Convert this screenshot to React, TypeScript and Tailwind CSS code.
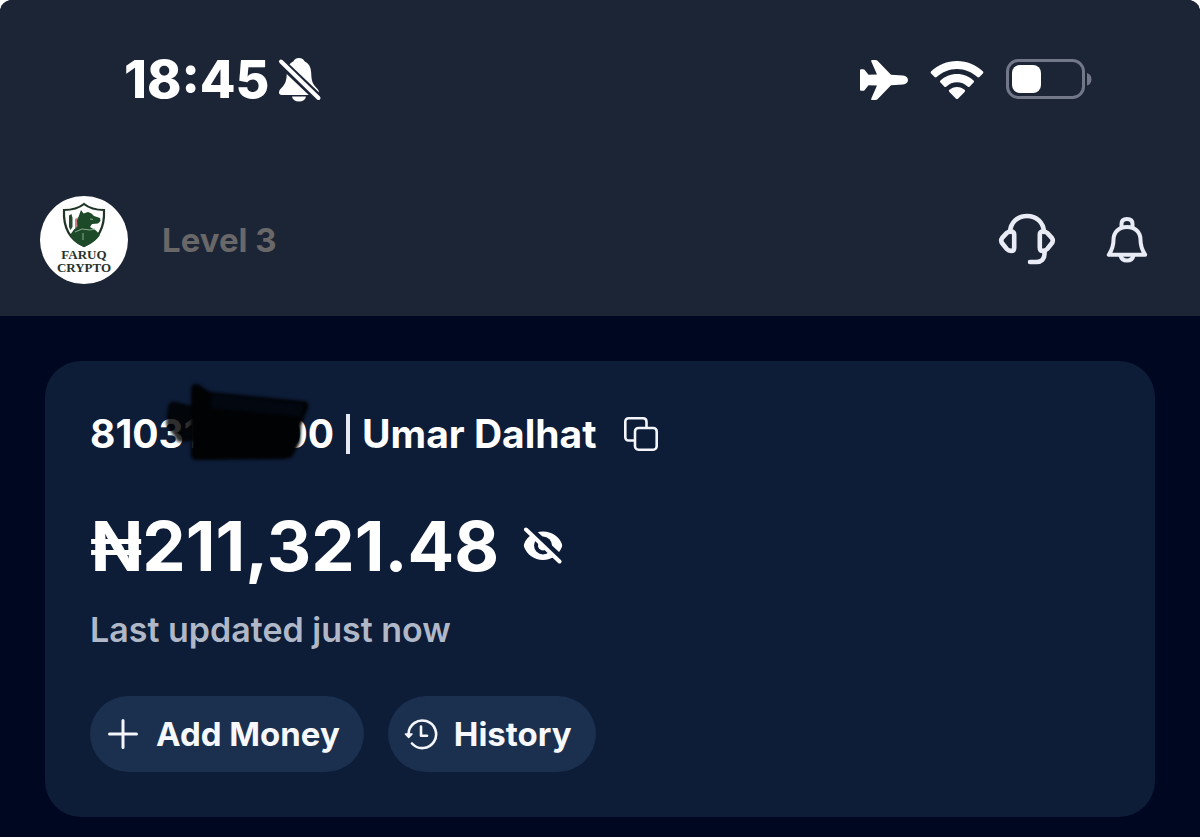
// App.tsx

import { ReactNode, useState } from 'react';

function SilentIcon() {
  return (
    <svg width="44" height="46" viewBox="0 0 44 46" fill="none" aria-hidden="true">
      <path
        d="M21 1c-3 0-4.800 1.500-5.500 3.300C11 6.500 9 10.500 8.800 16c-.2 7-1.300 10.500-4 13.500C3 31.600 1 33 1 35.500c0 1.600 1 2.400 2.800 2.400h34.400c1.800 0 2.800-.8 2.800-2.400 0-2.500-2-3.900-3.800-6-2.700-3-3.800-6.500-4-13.500C33 10.500 31 6.500 26.500 4.300 25.800 2.500 24 1 21 1Z"
        fill="#fff"
      />
      <path d="M14 39.500h14c-.6 3.200-3.200 5-7 5s-6.400-1.800-7-5Z" fill="#fff" />
      <path d="m2 4.500 40 38" stroke="#1c2536" strokeWidth="9" />
      <path d="m3 4.500 37.500 36.500" stroke="#fff" strokeWidth="4" strokeLinecap="round" />
    </svg>
  );
}

function PlaneIcon() {
  return (
    <svg width="48" height="42" viewBox="0 0 48 42" fill="#fff" aria-hidden="true">
      <path d="M43 16.400c3 .4 5 2.200 5 4.600s-2 4.200-5 4.600l-12 .6-13.500 14c-.6.6-1.200.8-2 .8h-3.200c-1 0-1.400-.6-1-1.600L17 26.600l-8.500-.4-4 5c-.3.4-.6.6-1.200.6H1.200c-.8 0-1.200-.5-1.200-1.300V11.500c0-.8.400-1.300 1.200-1.300h2.100c.6 0 .9.200 1.200.6l4 5 8.500-.4-5.700-12.800c-.4-1 0-1.600 1-1.600h3.200c.8 0 1.400.2 2 .8L31 15.800Z" />
    </svg>
  );
}

function WifiIcon() {
  return (
    <svg width="54" height="40" viewBox="0 0 54 40" fill="#fff" aria-hidden="true">
      <path d="M27 1C17 1 8 4.800 1.200 11.200c-.7.7-.7 1.500-.1 2.200l3.500 3.700c.6.6 1.400.6 2.100 0C12.100 12 19.200 9 27 9s14.900 3 20.300 8.100c.7.6 1.500.6 2.100 0l3.500-3.700c.6-.7.600-1.500-.1-2.200C46 4.800 37 1 27 1Z" />
      <path d="M27 14c-6.500 0-12.200 2.500-16.500 6.400-.7.7-.7 1.500 0 2.200l3.700 3.800c.6.700 1.400.7 2.200 0 2.900-2.600 6.500-4.200 10.600-4.200s7.700 1.600 10.600 4.200c.8.7 1.600.7 2.200 0l3.700-3.800c.7-.7.7-1.500 0-2.200C39.200 16.500 33.500 14 27 14Z" />
      <path d="M27 27c-3 0-5.600 1.100-7.600 2.800-.7.600-.7 1.400 0 2.100l6.400 6.500c.8.800 1.600.8 2.400 0l6.400-6.500c.7-.7.7-1.500 0-2.100C32.600 28.100 30 27 27 27Z" />
    </svg>
  );
}

function BatteryIcon() {
  return (
    <svg width="86" height="42" viewBox="0 0 86 42" fill="none" aria-hidden="true">
      <rect x="1.500" y="1.500" width="76" height="37" rx="11" stroke="#727888" strokeWidth="3" />
      <rect x="6" y="6" width="29" height="28" rx="8" fill="#fff" />
      <path d="M81 14c2.900.8 4.500 3.300 4.500 6.300s-1.600 5.500-4.500 6.300Z" fill="#727888" />
    </svg>
  );
}

function HeadsetIcon() {
  return (
    <svg
      width="58"
      height="54"
      viewBox="0 0 58 54"
      fill="none"
      stroke="#e9ecf5"
      strokeWidth="4.600"
      strokeLinecap="round"
      strokeLinejoin="round"
      aria-hidden="true"
    >
      <path d="M12 19C12.500 9.500 19.500 3 29 3s16.500 6.500 17 16" />
      <path d="M13 18.500c2 0 3.200 1.200 3.200 3.200v13c0 2-1.200 3.200-3.200 3.200-1.800 0-3-.6-4.200-1.900l-4.600-5.700c-1.200-1.700-1.200-3.700 0-5.400l4.600-5c1.200-1.100 2.400-1.400 4.200-1.400Z" />
      <path d="M45 18.500c-2 0-3.200 1.200-3.200 3.200v13c0 2 1.200 3.200 3.200 3.200 1.800 0 3-.6 4.200-1.900l4.600-5.700c1.200-1.700 1.200-3.700 0-5.400l-4.600-5c-1.200-1.100-2.400-1.400-4.200-1.400Z" />
      <path d="M46.500 38.500V41c0 5-3 8-8 8H32" />
    </svg>
  );
}

function BellIcon() {
  return (
    <svg
      width="42"
      height="50"
      viewBox="0 0 42 50"
      fill="none"
      stroke="#e9ecf5"
      strokeWidth="4"
      strokeLinecap="round"
      strokeLinejoin="round"
      aria-hidden="true"
    >
      <path d="M15.500 12V9C15.500 5.700 17.500 4 21 4s5.500 1.700 5.500 5v3" />
      <path d="M21 12c-8 0-13.500 5-13.500 13 0 6-.9 9-4.700 14.800h36.400C35.400 34 34.500 31 34.500 25c0-8-5.500-13-13.500-13Z" />
      <path d="M14.500 40.500c.8 3.800 3 5 6.500 5s5.700-1.200 6.500-5" />
    </svg>
  );
}

function CopyIcon() {
  return (
    <svg
      width="34"
      height="34"
      viewBox="0 0 34 34"
      fill="none"
      stroke="#f4f6fb"
      strokeWidth="2.600"
      strokeLinejoin="round"
      aria-hidden="true"
    >
      <path d="M11 23.500H4.800c-2.300 0-3.500-1.200-3.500-3.500V4.800c0-2.300 1.200-3.500 3.500-3.500H19c2.300 0 3.500 1.200 3.500 3.500V11" />
      <rect x="11" y="11" width="21.700" height="21.700" rx="3.500" />
    </svg>
  );
}

function EyeOffIcon({ slashed }: { slashed: boolean }) {
  return (
    <svg width="40" height="38" viewBox="0 0 40 38" fill="none" aria-hidden="true">
      <path
        d="M20 4.500C11 4.500 4 9.500 1.200 16.700c-.5 1.200-.5 2.400 0 3.600C4 27.500 11 33 20 33s16-5.500 18.800-12.700c.5-1.200.5-2.400 0-3.600C36 9.500 29 4.500 20 4.500Z"
        fill="#fff"
      />
      <circle cx="20" cy="18.500" r="9" fill="#0d1c37" />
      <circle cx="20" cy="18.500" r="5" fill="#fff" />
      {slashed && (
        <>
          <path d="m2-2 40 37.500" stroke="#0d1c37" strokeWidth="7" />
          <path d="m3 2.500 33.500 32" stroke="#fff" strokeWidth="4" strokeLinecap="round" />
        </>
      )}
    </svg>
  );
}

function PlusIcon() {
  return (
    <svg width="34" height="32" viewBox="0 0 34 32" stroke="#f4f6fb" strokeWidth="3" strokeLinecap="round" aria-hidden="true">
      <path d="M17 2.500v27M3.500 16h27" />
    </svg>
  );
}

function HistoryIcon() {
  return (
    <svg
      width="34"
      height="32"
      viewBox="0 0 34 32"
      fill="none"
      stroke="#f4f6fb"
      strokeWidth="2.600"
      strokeLinecap="round"
      strokeLinejoin="round"
      aria-hidden="true"
    >
      <path d="M4.500 16A13.800 13.800 0 1 1 8 25.500" />
      <path d="M1.500 16h6.500L4.700 19.500Z" fill="#f4f6fb" strokeWidth="1.600" />
      <path d="M17 8.500v9.200h6" />
    </svg>
  );
}

function Shield() {
  return (
    <svg width="46" height="46" viewBox="0 0 46 46" fill="none" aria-hidden="true">
      <path d="M23 2c5 4 12 6 20 6 .8 16-4 29-20 36C7 37 2.200 24 3 8c8 0 15-2 20-6Z" fill="#fdfefd" stroke="#1f3327" strokeWidth="2.200" />
      <path d="M8 13.500 10.500 12l1 4v9L9.500 28 8 25Z" fill="#234a30" />
      <path d="m14 17 2.500-1.500 2 9-2.500 4-2-3Z" fill="#c98080" />
      <path
        d="m20 8 2.500 3.500L27 10l3.500 1.500L33 14l6 2 .5 3-2.500 2.500-6 .5-2 3 6 3.500 4 4.500c-3 5-9 9-16 12-6-2.500-11.500-7-14-12l4-5.500 3.500-3-.5-6 2-5Z"
        fill="#1d4a28"
      />
      <path d="m14 30 7-3 8 1 5-1M22 31v7M29 17l3 .5" stroke="#8eaa93" strokeWidth="1" />
    </svg>
  );
}

// marker strokes that cover the middle digits of the account number
function Scribble() {
  return (
    <svg
      className="pointer-events-none absolute -top-6 left-17 h-20 w-40 overflow-visible"
      viewBox="0 0 160 80"
      fill="none"
      aria-hidden="true"
    >
      <defs>
        <filter id="marker" x="-10%" y="-10%" width="120%" height="120%" colorInterpolationFilters="sRGB">
          <feGaussianBlur stdDeviation="1.500" />
        </filter>
      </defs>
      <g filter="url(#marker)">
        <path d="M10 24c2-5 5-5 8-4l17 4v35l-15 1L8 42Z" fill="#000" fillOpacity=".82" />
        <path d="M33 6c2-5 6-6 11-1l8 5 92 9c5 0 7 2 6 7l-7 17-1 17-8 15-7 2-88 1c-4 0-6-2-6-6V60Z" fill="#010204" />
        <path d="m54 12 92 10-3 13-90-9Z" fill="#020710" />
      </g>
    </svg>
  );
}

function PillButton({ icon, label }: { icon: ReactNode; label: string }) {
  return (
    <button
      type="button"
      className="flex h-19 items-center gap-4 rounded-full bg-[#1b2f4e] pr-6 pl-4 text-[33px] leading-10 font-bold text-[#f6f8fc]"
    >
      {icon}
      {label}
    </button>
  );
}

export default function App() {
  const [visible, setVisible] = useState(true);

  return (
    <div className="min-h-screen overflow-hidden rounded-t-xl bg-[#000720] font-['Inter',sans-serif] text-white">
      <header className="bg-[#1c2536] pt-12 pb-8">
        <div className="flex h-16 items-center justify-between pr-27 pl-31">
          <div className="flex items-center gap-2">
            <span className="text-[52px] leading-16 font-extrabold">18:45</span>
            <SilentIcon />
          </div>
          <div className="flex items-center gap-[22px]">
            <PlaneIcon />
            <WifiIcon />
            <BatteryIcon />
          </div>
        </div>

        <div className="mt-21 flex items-center justify-between pr-13 pl-10">
          <div className="flex items-center gap-[34px]">
            <div className="flex size-22 flex-col items-center rounded-full bg-white pt-1.5 font-['Liberation_Serif',serif] text-[13px] leading-[13px] font-bold text-[#26332c]">
              <Shield />
              <span>FARUQ</span>
              <span>CRYPTO</span>
            </div>
            <span className="text-[33px] leading-10 font-bold text-[#6a6768]">Level 3</span>
          </div>
          <div className="flex items-center gap-[50px]">
            <button type="button" aria-label="Support">
              <HeadsetIcon />
            </button>
            <button type="button" aria-label="Notifications">
              <BellIcon />
            </button>
          </div>
        </div>
      </header>

      <main className="px-[45px] pt-[45px] pb-5">
        <section className="rounded-[36px] bg-[#0d1c37] p-[45px]">
          <div className="flex items-center gap-7 text-[39px] leading-14 font-bold">
            <div className="relative flex items-center gap-2">
              <span className="flex w-61 justify-between">
                <span>81031</span>
                <span>00</span>
              </span>
              <span className="mx-1 h-10 w-1 bg-[#e6e9f0]" />
              <span>Umar Dalhat</span>
              <Scribble />
            </div>
            <button type="button" aria-label="Copy account number">
              <CopyIcon />
            </button>
          </div>

          <div className="mt-11 flex items-center gap-6">
            <span className="text-[69px] leading-20 font-bold">{visible ? '₦211,321.48' : '₦******'}</span>
            <button type="button" aria-label="Toggle balance" onClick={() => setVisible(!visible)}>
              <EyeOffIcon slashed={visible} />
            </button>
          </div>

          <p className="mt-6 text-[34px] leading-10 font-semibold text-[#b0b8c8]">Last updated just now</p>

          <div className="mt-[46px] flex gap-6">
            <PillButton icon={<PlusIcon />} label="Add Money" />
            <PillButton icon={<HistoryIcon />} label="History" />
          </div>
        </section>
      </main>
    </div>
  );
}
